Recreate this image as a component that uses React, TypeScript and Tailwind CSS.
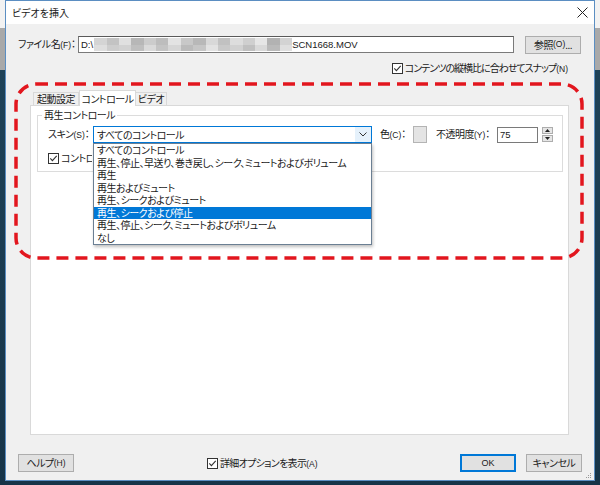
import React from "react";

const Acc = ({ k }: { k: string }) => <span className="text-[8.5px] tracking-normal font-['Liberation_Sans',sans-serif]">({k})</span>;

function Check() {
  return (
    <svg width="11" height="11" viewBox="0 0 11 11" className="shrink-0">
      <rect x="0.5" y="0.5" width="10" height="10" fill="white" stroke="#333333" />
      <path d="M2.3 5.4 L4.4 7.6 L8.7 2.9" fill="none" stroke="#333333" strokeWidth="1.1" />
    </svg>
  );
}

const mosaicTop = [
  "bg-[#d4d4d4]", "bg-[#c3c3c3]", "bg-[#e0e0e0]", "bg-[#b7b7b7]", "bg-[#cccccc]", "bg-[#bdbdbd]",
  "bg-[#e3e3e3]", "bg-[#c8c8c8]", "bg-[#b8b8b8]", "bg-[#d8d8d8]", "bg-[#c1c1c1]", "bg-[#dddddd]",
  "bg-[#cfcfcf]", "bg-[#e6e6e6]", "bg-[#b2b2b2]", "bg-[#d3d3d3]",
];
const mosaicBot = [
  "bg-[#dedede]", "bg-[#cdcdcd]", "bg-[#d2d2d2]", "bg-[#bfbfbf]", "bg-[#dadada]", "bg-[#c4c4c4]",
  "bg-[#d6d6d6]", "bg-[#bbbbbb]", "bg-[#c6c6c6]", "bg-[#e2e2e2]", "bg-[#c9c9c9]", "bg-[#d1d1d1]",
  "bg-[#c0c0c0]", "bg-[#d9d9d9]", "bg-[#bababa]", "bg-[#dfdfdf]",
];

const items = [
  "すべてのコントロール",
  "再生、停止、早送り、巻き戻し、シーク、ミュートおよびボリューム",
  "再生",
  "再生およびミュート",
  "再生、シークおよびミュート",
  "再生、シークおよび停止",
  "再生、停止、シーク、ミュートおよびボリューム",
  "なし",
];

function Btn({ children, def }: { children: React.ReactNode; def?: boolean }) {
  return (
    <div
      className={
        "w-[56px] h-[18px] flex items-center justify-center bg-[#e1e1e1] border leading-none " +
        (def ? "border-[#0078d7] shadow-[inset_0_0_0_1px_#0078d7]" : "border-[#adadad]")
      }
    >
      {children}
    </div>
  );
}

export default function App() {
  return (
    <div className="relative w-[600px] h-[485px] overflow-hidden whitespace-nowrap bg-[#1b3b50] font-['Noto_Sans_CJK_JP',sans-serif] [font-feature-settings:'palt'] text-[10px] tracking-[-0.5px] text-[#1a1a1a]">
      {/* desktop background */}
      <div className="absolute inset-x-0 top-0 h-[28px] bg-[#f2f2f2]" />
      <div className="absolute inset-x-0 top-[28px] h-[42px] bg-[#a9a9a9]" />
      <div className="absolute inset-x-0 top-[70px] bottom-0 bg-gradient-to-b from-[#1e4258] to-[#173448]" />

      {/* window */}
      <div className="absolute left-[5px] top-0 w-[590px] h-[481px] border border-[#5b8ec2] flex flex-col bg-[#f0f0f0]">
        {/* title bar */}
        <div className="h-[23px] bg-white flex items-center justify-between pl-[6px] pr-[6px] shrink-0">
          <span className="text-[10px] leading-none tracking-normal">ビデオを挿入</span>
          <svg width="11" height="11" viewBox="0 0 11 11">
            <path d="M0.5 0.5 L10.5 10.5 M10.5 0.5 L0.5 10.5" stroke="#222" strokeWidth="1" />
          </svg>
        </div>

        {/* body */}
        <div className="flex-1 flex flex-col px-[12px]">
          {/* file row */}
          <div className="mt-[12px] h-[17px] flex items-center">
            <div className="w-[60px] leading-none">
              ファイル名<Acc k="F" />：
            </div>
            <div className="flex-1 h-[17px] bg-white border border-[#7a7a7a] border-t-[#5a5a5a] flex items-center pl-[2px] overflow-hidden">
              <span className="font-['Liberation_Sans',sans-serif] text-[9.5px] tracking-normal leading-none">D:\</span>
              <div className="ml-[1px] w-[198px] h-[13px] grid grid-cols-[repeat(16,1fr)] grid-rows-2">
                {mosaicTop.map((c, i) => (
                  <div key={"t" + i} className={c} />
                ))}
                {mosaicBot.map((c, i) => (
                  <div key={"b" + i} className={c} />
                ))}
              </div>
              <span className="font-['Liberation_Sans',sans-serif] text-[9.5px] tracking-normal leading-none">SCN1668.MOV</span>
            </div>
            <div className="ml-[11px] mr-[1px]">
              <Btn>
                参照<Acc k="O" />...
              </Btn>
            </div>
          </div>

          {/* snap checkbox */}
          <div className="mt-[9px] h-[13px] flex items-center justify-end pr-[14px] gap-[2px]">
            <Check />
            <span className="leading-none tracking-[-1px]">
              コンテンツの縦横比に合わせてスナップ<Acc k="N" />
            </span>
          </div>

          {/* tabs */}
          <div className="mt-[15px] ml-[12px] mr-[13px] flex flex-col">
            <div className="h-[15px] flex items-end pl-[3px]">
              <div className="w-[46px] h-[13px] border border-b-0 border-[#d9d9d9] bg-[#f0f0f0] flex items-center justify-center leading-none">
                起動設定
              </div>
              <div className="w-[57px] h-[16px] -mb-[1px] border border-b-0 border-[#d9d9d9] bg-white flex items-center justify-center leading-none relative z-10">
                コントロール
              </div>
              <div className="w-[31px] h-[13px] border border-b-0 border-l-0 border-[#d9d9d9] bg-[#f0f0f0] flex items-center justify-center leading-none">
                ビデオ
              </div>
            </div>
            <div className="h-[330px] bg-white border border-[#d9d9d9] pt-[3px] pl-[6px] pr-[5px]">
              <fieldset className="border border-[#dcdcdc] pb-[7px]">
                <legend className="ml-[4px] px-[2px] leading-[12px]">再生コントロール</legend>
                <div className="mt-[5px] pl-[10px] flex items-center h-[17px]">
                  <div className="w-[45px] leading-none">
                    スキン<Acc k="S" />：
                  </div>
                  <div className="relative w-[279px] h-[17px] border border-[#0078d7] bg-white flex items-center">
                    <span className="pl-[3px] flex-1 leading-none">すべてのコントロール</span>
                    <div className="w-[16px] h-full bg-[#e5f1fb] flex items-center justify-center">
                      <svg width="8" height="5" viewBox="0 0 8 5">
                        <path d="M0.5 0.5 L4 4 L7.5 0.5" fill="none" stroke="#333" strokeWidth="1" />
                      </svg>
                    </div>
                    {/* dropdown list */}
                    <div className="absolute left-[-1px] top-[16px] w-[279px] bg-white border border-[#6b7f93] shadow-[1px_2px_3px_rgba(0,0,0,0.25)] z-20">
                      {items.map((t, i) => (
                        <div
                          key={i}
                          className={
                            "h-[12.5px] leading-[12.5px] pl-[3px] " +
                            (i === 5 ? "bg-[#0078d7] text-white" : "")
                          }
                        >
                          {t}
                        </div>
                      ))}
                    </div>
                  </div>
                  <div className="ml-[8px] w-[33px] leading-none">
                    色<Acc k="C" />：
                  </div>
                  <div className="w-[14px] h-[17px] bg-[#e4e4e4] border border-[#b4b4b4]" />
                  <div className="ml-[9px] w-[61px] leading-none">
                    不透明度<Acc k="Y" />：
                  </div>
                  <div className="w-[41px] h-[16px] bg-white border border-[#7a7a7a] flex items-center pl-[2px] leading-none font-['Liberation_Sans',sans-serif] text-[9.5px] tracking-normal">
                    75
                  </div>
                  <div className="ml-[4px] w-[11px] h-[15px] flex flex-col gap-[1px]">
                    <div className="flex-1 border border-[#adadad] bg-[#e6e6e6] flex items-center justify-center">
                      <svg width="5" height="3" viewBox="0 0 5 3"><path d="M0 3 L2.5 0 L5 3 Z" fill="#222" /></svg>
                    </div>
                    <div className="flex-1 border border-[#adadad] bg-[#e6e6e6] flex items-center justify-center">
                      <svg width="5" height="3" viewBox="0 0 5 3"><path d="M0 0 L2.5 3 L5 0 Z" fill="#222" /></svg>
                    </div>
                  </div>
                </div>
                <div className="mt-[9px] pl-[10px] flex items-center h-[12px] gap-[2px]">
                  <Check />
                  <span className="leading-none w-[31px] overflow-hidden">コントロール</span>
                </div>
              </fieldset>
            </div>
          </div>

          {/* footer */}
          <div className="mt-[19px] h-[18px] flex items-center">
            <Btn>
              ヘルプ<Acc k="H" />
            </Btn>
            <div className="ml-[133px] flex items-center gap-[2px]">
              <Check />
              <span className="leading-none tracking-[-0.7px]">
                詳細オプションを表示<Acc k="A" />
              </span>
            </div>
            <div className="ml-auto flex gap-[10px]">
              <Btn def>
                <span className="font-['Liberation_Sans',sans-serif] text-[9px] tracking-normal">OK</span>
              </Btn>
              <Btn>キャンセル</Btn>
            </div>
          </div>
          <div className="flex-1 flex justify-end items-end pb-[1px] -mr-[10px]">
            <svg width="6" height="6" viewBox="0 0 6 6">
              <rect x="4" y="0" width="1" height="1" fill="#999" />
              <rect x="2" y="2" width="1" height="1" fill="#999" />
              <rect x="4" y="2" width="1" height="1" fill="#999" />
              <rect x="0" y="4" width="1" height="1" fill="#999" />
              <rect x="2" y="4" width="1" height="1" fill="#999" />
              <rect x="4" y="4" width="1" height="1" fill="#999" />
            </svg>
          </div>
        </div>
      </div>

      {/* red dashed annotation */}
      <svg className="absolute left-0 top-0 pointer-events-none" width="600" height="485" viewBox="0 0 600 485">
        <rect x="16" y="84" width="566" height="174" rx="20" ry="20" fill="none" stroke="#e2161e" strokeWidth="3.5" strokeDasharray="12 7" />
      </svg>

      {/* mouse cursor */}
      <svg className="absolute left-[217px] top-[207px]" width="16" height="24" viewBox="0 0 16 24">
        <path d="M1.5 1 L1.5 19 L5.8 14.8 L9 22 L12 20.7 L8.9 13.7 L14.5 13.7 Z" fill="#000" stroke="#fff" strokeWidth="1.2" strokeLinejoin="round" />
      </svg>
    </div>
  );
}
